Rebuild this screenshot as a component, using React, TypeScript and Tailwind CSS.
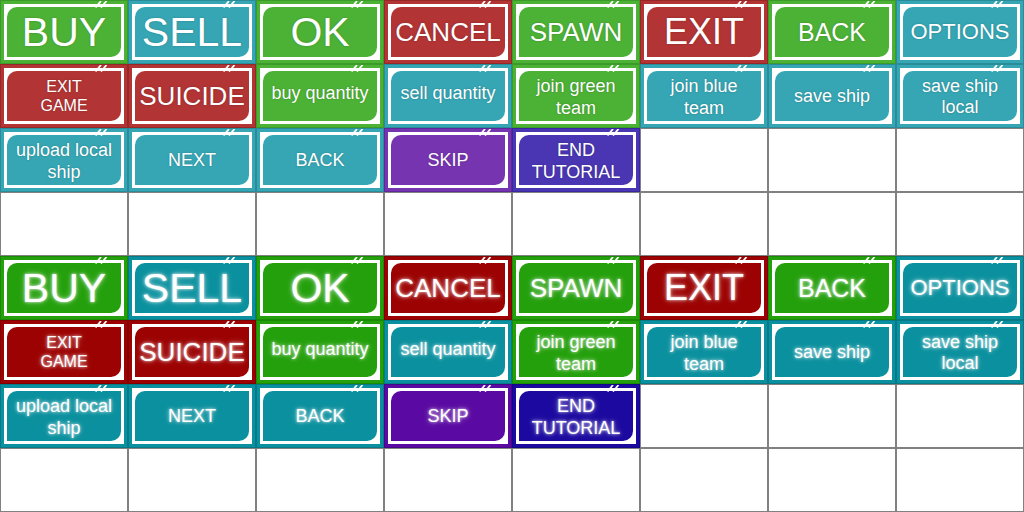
import React from "react";

type Tone = "green" | "teal" | "red" | "purple" | "indigo";

const normal: Record<Tone, { bg: string; border: string }> = {
  green: { bg: "bg-[#4cb236]", border: "border-[#3c9a28]" },
  teal: { bg: "bg-[#36a6b4]", border: "border-[#2a8c98]" },
  red: { bg: "bg-[#b23434]", border: "border-[#962828]" },
  purple: { bg: "bg-[#7634b0]", border: "border-[#5e2898]" },
  indigo: { bg: "bg-[#4a36b2]", border: "border-[#3828a0]" },
};

const glow: Record<Tone, { bg: string; border: string }> = {
  green: { bg: "bg-[#24a00c]", border: "border-[#1a8a06]" },
  teal: { bg: "bg-[#0a909e]", border: "border-[#067a86]" },
  red: { bg: "bg-[#9c0202]", border: "border-[#820000]" },
  purple: { bg: "bg-[#5a0aa2]", border: "border-[#46068a]" },
  indigo: { bg: "bg-[#1c0aa0]", border: "border-[#12068a]" },
};

type Item = { t: Tone; lines: string[]; size: string; shift?: string } | null;

const rows: Item[][] = [
  [
    { t: "green", lines: ["BUY"], size: "text-[41px]" },
    { t: "teal", lines: ["SELL"], size: "text-[41px]" },
    { t: "green", lines: ["OK"], size: "text-[41px]" },
    { t: "red", lines: ["CANCEL"], size: "text-[26px]" },
    { t: "green", lines: ["SPAWN"], size: "text-[26px]" },
    { t: "red", lines: ["EXIT"], size: "text-[36px]" },
    { t: "green", lines: ["BACK"], size: "text-[25px]" },
    { t: "teal", lines: ["OPTIONS"], size: "text-[22px]" },
  ],
  [
    { t: "red", lines: ["EXIT", "GAME"], size: "text-[16px]", shift: "pt-[1px]" },
    { t: "red", lines: ["SUICIDE"], size: "text-[26px]" },
    { t: "green", lines: ["buy quantity"], size: "text-[18px]", shift: "pb-[6px]" },
    { t: "teal", lines: ["sell quantity"], size: "text-[18px]", shift: "pb-[6px]" },
    { t: "green", lines: ["join green", "team"], size: "text-[18px]", shift: "pt-[3px]" },
    { t: "teal", lines: ["join blue", "team"], size: "text-[18px]", shift: "pt-[3px]" },
    { t: "teal", lines: ["save ship"], size: "text-[18px]", shift: "pb-[1px]" },
    { t: "teal", lines: ["save ship", "local"], size: "text-[18px]", shift: "pt-[2px]" },
  ],
  [
    { t: "teal", lines: ["upload local", "ship"], size: "text-[18px]", shift: "pt-[3px]" },
    { t: "teal", lines: ["NEXT"], size: "text-[18px]" },
    { t: "teal", lines: ["BACK"], size: "text-[18px]" },
    { t: "purple", lines: ["SKIP"], size: "text-[18px]" },
    { t: "indigo", lines: ["END", "TUTORIAL"], size: "text-[18px]", shift: "pt-[3px]" },
    null,
    null,
    null,
  ],
  [null, null, null, null, null, null, null, null],
];

function Slashes() {
  return (
    <svg className="absolute top-0 left-[94px]" width="14" height="7" viewBox="0 0 14 7">
      <line x1="0.5" y1="6.5" x2="6" y2="0" stroke="#ffffff" strokeWidth="1.8" />
      <line x1="6" y1="6.5" x2="11.5" y2="0" stroke="#ffffff" strokeWidth="1.8" />
    </svg>
  );
}

function Cell({ item, hover }: { item: Item; hover: boolean }) {
  if (!item) {
    return <div className="w-[128px] h-[64px] bg-white border border-[#808080]" />;
  }
  const c = hover ? glow[item.t] : normal[item.t];
  const shadow = hover
    ? "[text-shadow:0_0_3px_rgba(255,255,255,0.85),0_0_6px_rgba(255,255,255,0.45)]"
    : "[text-shadow:0_0_2px_rgba(0,0,0,0.25)]";
  return (
    <div className={`relative w-[128px] h-[64px] border ${c.border} ${c.bg} p-[3px]`}>
      <div className="w-full h-full bg-white p-[3px]">
        <div
          className={`w-full h-full rounded-tl-[10px] rounded-br-[10px] ${c.bg} flex flex-col items-center justify-center text-center text-white ${item.size} ${shadow} ${item.shift ?? ""} ${item.lines.length > 1 ? "leading-[1.18]" : "leading-none"}`}
        >
          {item.lines.map((l, i) => (
            <div key={i}>{l}</div>
          ))}
        </div>
      </div>
      <Slashes />
    </div>
  );
}

export default function App() {
  return (
    <div className="w-[1024px] h-[512px] bg-white font-['Liberation_Sans',Arial,sans-serif] grid grid-cols-[repeat(8,128px)] grid-rows-[repeat(8,64px)] overflow-hidden">
      {[false, true].map((hover) =>
        rows.map((row, ri) =>
          row.map((item, ci) => <Cell key={`${hover}-${ri}-${ci}`} item={item} hover={hover} />)
        )
      )}
    </div>
  );
}
